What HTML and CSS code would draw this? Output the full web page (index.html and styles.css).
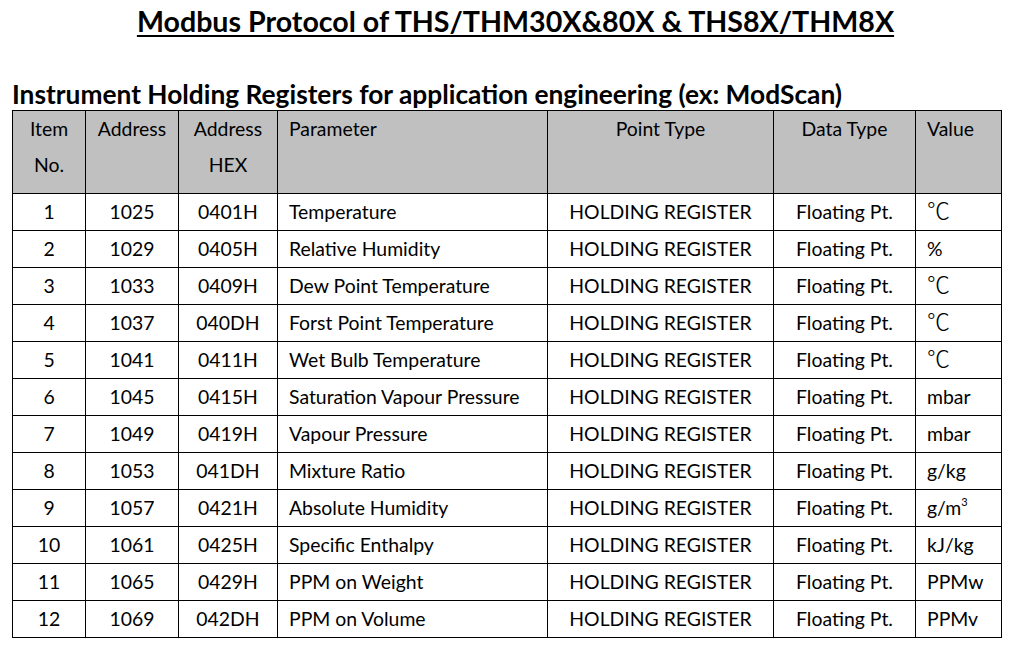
FILE: index.html
```html
<!DOCTYPE html>
<html>
<head>
<meta charset="utf-8">
<title>Modbus Protocol</title>
<link rel="stylesheet" href="styles.css">
</head>
<body>
<h1 class="title">Modbus Protocol of THS/THM30X&amp;80X &amp; THS8X/THM8X</h1>
<h2 class="subtitle">Instrument Holding Registers for application engineering (ex: ModScan)</h2>
<table class="regs">
  <colgroup>
    <col class="c-item"><col class="c-addr"><col class="c-hex"><col class="c-param"><col class="c-point"><col class="c-data"><col class="c-val">
  </colgroup>
  <thead>
    <tr>
      <th>Item<br>No.</th>
      <th>Address</th>
      <th>Address<br>HEX</th>
      <th class="left">Parameter</th>
      <th>Point Type</th>
      <th>Data Type</th>
      <th class="left">Value</th>
    </tr>
  </thead>
  <tbody>
    <tr><td>1</td><td>1025</td><td>0401H</td><td class="left">Temperature</td><td>HOLDING REGISTER</td><td>Floating Pt.</td><td class="left"><span class="deg">℃</span></td></tr>
    <tr><td>2</td><td>1029</td><td>0405H</td><td class="left">Relative Humidity</td><td>HOLDING REGISTER</td><td>Floating Pt.</td><td class="left">%</td></tr>
    <tr><td>3</td><td>1033</td><td>0409H</td><td class="left">Dew Point Temperature</td><td>HOLDING REGISTER</td><td>Floating Pt.</td><td class="left"><span class="deg">℃</span></td></tr>
    <tr><td>4</td><td>1037</td><td>040DH</td><td class="left">Forst Point Temperature</td><td>HOLDING REGISTER</td><td>Floating Pt.</td><td class="left"><span class="deg">℃</span></td></tr>
    <tr><td>5</td><td>1041</td><td>0411H</td><td class="left">Wet Bulb Temperature</td><td>HOLDING REGISTER</td><td>Floating Pt.</td><td class="left"><span class="deg">℃</span></td></tr>
    <tr><td>6</td><td>1045</td><td>0415H</td><td class="left">Saturation Vapour Pressure</td><td>HOLDING REGISTER</td><td>Floating Pt.</td><td class="left">mbar</td></tr>
    <tr><td>7</td><td>1049</td><td>0419H</td><td class="left">Vapour Pressure</td><td>HOLDING REGISTER</td><td>Floating Pt.</td><td class="left">mbar</td></tr>
    <tr><td>8</td><td>1053</td><td>041DH</td><td class="left">Mixture Ratio</td><td>HOLDING REGISTER</td><td>Floating Pt.</td><td class="left">g/kg</td></tr>
    <tr><td>9</td><td>1057</td><td>0421H</td><td class="left">Absolute Humidity</td><td>HOLDING REGISTER</td><td>Floating Pt.</td><td class="left">g/m<sup class="sup">3</sup></td></tr>
    <tr><td>10</td><td>1061</td><td>0425H</td><td class="left">Specific Enthalpy</td><td>HOLDING REGISTER</td><td>Floating Pt.</td><td class="left">kJ/kg</td></tr>
    <tr><td>11</td><td>1065</td><td>0429H</td><td class="left">PPM on Weight</td><td>HOLDING REGISTER</td><td>Floating Pt.</td><td class="left">PPMw</td></tr>
    <tr><td>12</td><td>1069</td><td>042DH</td><td class="left">PPM on Volume</td><td>HOLDING REGISTER</td><td>Floating Pt.</td><td class="left">PPMv</td></tr>
  </tbody>
</table>
</body>
</html>
```

FILE: styles.css
```css
html, body {
  margin: 0;
  padding: 0;
  background: #ffffff;
}

body {
  font-family: Lato, "Open Sans", sans-serif;
  color: #000000;
}

.title {
  margin: 0;
  padding: 2px 0 0 17px;
  height: 38px;
  line-height: 38px;
  font-size: 28.6px;
  font-weight: 700;
  text-align: center;
  text-decoration: underline;
  text-decoration-thickness: 2px;
  text-underline-offset: 3px;
}

.subtitle {
  margin: 38px 0 0 12px;
  height: 32px;
  line-height: 32px;
  font-size: 26.3px;
  font-weight: 700;
}

.regs {
  margin-left: 12px;
  border-collapse: collapse;
  table-layout: fixed;
  width: 989px;
  font-size: 19.4px;
}

.c-item { width: 73px; }
.c-addr { width: 93px; }
.c-hex { width: 99px; }
.c-param { width: 270px; }
.c-point { width: 226px; }
.c-data { width: 142px; }
.c-val { width: 86px; }

.regs th,
.regs td {
  border: 1px solid #000000;
  padding: 0;
  line-height: 36px;
  text-align: center;
  white-space: nowrap;
}

.regs th {
  background: #c0c0c0;
  font-weight: 400;
  vertical-align: top;
  padding-bottom: 10px;
}

.regs td {
  vertical-align: middle;
}

.regs .left {
  text-align: left;
  padding-left: 11px;
}

.deg {
  font-family: "Noto Sans CJK SC", "DejaVu Sans", sans-serif;
  font-weight: 200;
  font-size: 23px;
  line-height: 0;
}

.sup {
  font-size: 11px;
  line-height: 0;
  vertical-align: 9px;
}
```
